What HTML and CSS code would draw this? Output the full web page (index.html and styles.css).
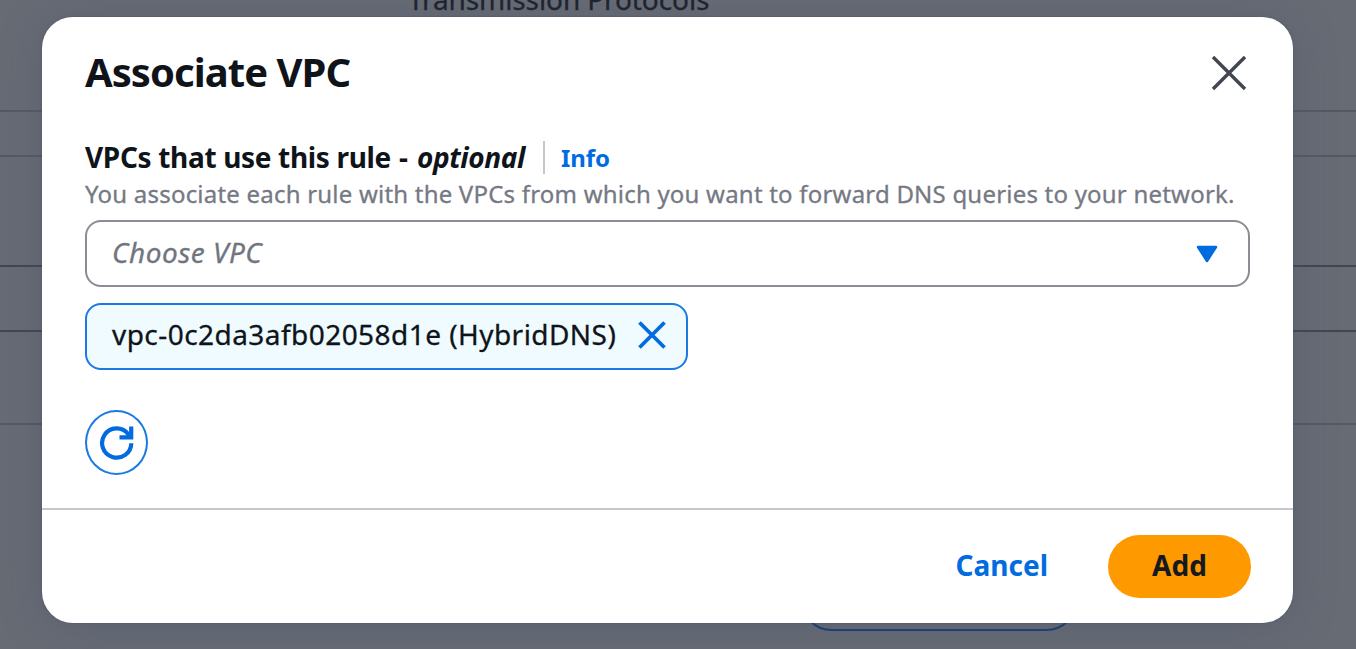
FILE: index.html
```
<!DOCTYPE html>
<html lang="en">
<head>
<meta charset="utf-8">
<title>Associate VPC</title>
<link rel="stylesheet" href="styles.css">
</head>
<body>
<div class="page">
  <div class="row row-heading"><span class="page-label">Transmission Protocols</span></div>
  <div class="row row-gap"></div>
  <div class="row row-tall"></div>
  <div class="row row-head"></div>
  <div class="row row-item"></div>
  <div class="row-last"><div class="page-button"></div></div>
</div>
<div class="modal" role="dialog" aria-labelledby="title">
  <header class="modal-header">
    <h1 class="title" id="title">Associate VPC</h1>
    <button class="close" aria-label="Close">
      <svg width="36" height="36" viewBox="0 0 36 36"><path d="M2 2 34 34M34 2 2 34"/></svg>
    </button>
  </header>
  <main class="modal-body">
    <div class="label-row">
      <span class="label">VPCs that use this rule</span>
      <span class="dash">-</span>
      <i class="optional">optional</i>
      <a class="info">Info</a>
    </div>
    <p class="description">You associate each rule with the VPCs from which you want to forward DNS queries to your network.</p>
    <div class="select">
      <span class="placeholder">Choose VPC</span>
      <svg class="caret" width="22" height="18" viewBox="0 0 22 18"><path d="M2 2H20L11 16Z"/></svg>
    </div>
    <div class="chip">
      <span class="chip-text">vpc-0c2da3afb02058d1e (HybridDNS)</span>
      <svg class="chip-close" width="28" height="28" viewBox="0 0 28 28"><path d="M1.5 1.5 26.5 26.5M26.5 1.5 1.5 26.5"/></svg>
    </div>
    <button class="refresh" aria-label="Refresh">
      <svg width="36" height="36" viewBox="0 0 36 36"><path d="M32.3 18.2A14.6 14.6 0 1 1 29 8.8L31 12M32.2 1.5V12.4H20.5"/></svg>
    </button>
  </main>
  <footer class="modal-footer">
    <button class="cancel">Cancel</button>
    <button class="add"><span class="add-text">Add</span></button>
  </footer>
</div>
</body>
</html>
```
FILE: styles.css
```
* { box-sizing: border-box; }
body { margin: 0; width: 1356px; height: 649px; overflow: hidden; background: #676b74; font-family: "Noto Sans", sans-serif; color: #0f141a; }
button { border: 0; padding: 0; background: none; font: inherit; color: inherit; }
svg { display: block; fill: none; flex: none; }
span, a, h1, p { white-space: nowrap; }
.page { height: 649px; display: flex; flex-direction: column; }
.row { border-bottom: 2px solid #555965; flex: none; }
.row-heading { height: 112px; padding-left: 408px; }
.page-label { display: block; margin-top: -18px; font-size: 28px; line-height: 34px; letter-spacing: -0.1px; color: #1c222d; -webkit-text-stroke: .3px #1c222d; }
.row-gap { height: 45px; }
.row-tall { height: 110px; border-color: #424652; }
.row-head { height: 65px; border-color: #424652; }
.row-item { height: 93px; }
.row-last { height: 224px; padding-left: 800px; }
.page-button { width: 278px; height: 206px; border: 2px solid #173e73; border-radius: 32px; }

.modal { position: absolute; left: 42px; top: 17px; width: 1251px; height: 606px; display: flex; flex-direction: column; background: #fff; border-radius: 31px; box-shadow: 0 4px 42px rgba(70, 80, 105, .35), 0 0 2px #4e535e; }
.modal-header { height: 112px; padding: 38px 46px 0 43px; display: flex; justify-content: space-between; align-items: flex-start; }
.title { margin: -11px 0 0; font-size: 40px; line-height: 56px; font-weight: 700; letter-spacing: -.95px; }
.close svg { stroke: #424650; stroke-width: 3.4; }
.modal-body { height: 379px; padding: 0 43px; display: flex; flex-direction: column; align-items: flex-start; }
.label-row { height: 46px; padding-top: 10px; display: flex; align-items: center; }
.label, .dash, .optional { font-size: 28px; line-height: 34px; font-weight: 700; }
.label { letter-spacing: -.33px; }
.dash { margin-left: 8px; }
.optional { margin-left: 9px; letter-spacing: -.4px; }
.info { margin-left: 18px; padding-left: 16px; border-left: 2px solid #c6c6cd; font-size: 24px; line-height: 33px; font-weight: 700; color: #006ce0; }
.description { margin: 2px 0 0; height: 43px; padding-top: 1px; font-size: 24px; line-height: 32px; letter-spacing: .21px; color: #757983; -webkit-text-stroke: .3px #757983; }
.select { width: 1165px; height: 67px; padding: 0 30px 3px 25px; border: 2px solid #8c8c94; border-radius: 16px; display: flex; justify-content: space-between; align-items: center; }
.placeholder { font-size: 28px; line-height: 36px; letter-spacing: .5px; font-style: italic; color: #70757f; -webkit-text-stroke: .3px #70757f; }
.caret { fill: #006ce0; stroke: #006ce0; stroke-width: 2.5; stroke-linejoin: round; margin-top: 3px; }
.chip { margin-top: 16px; width: 603px; height: 67px; padding: 0 20px 4px 25px; border: 2.5px solid #1a79e3; border-radius: 16px; background: #f0fbff; display: flex; justify-content: space-between; align-items: center; }
.chip-text { margin-top: -1px; font-size: 28px; line-height: 36px; letter-spacing: .45px; -webkit-text-stroke: .3px #0f141a; }
.chip-close { stroke: #006ce0; stroke-width: 3.8; }
.refresh { margin-top: 40px; width: 63px; height: 65px; border: 2.2px solid #1a79e3; border-radius: 50%; display: flex; align-items: center; justify-content: center; }
.refresh svg { stroke: #006ce0; stroke-width: 4.2; }
.modal-footer { height: 115px; border-top: 2.5px solid #c6c6cd; padding: 25px 42px 0 0; display: flex; justify-content: flex-end; gap: 60px; }
.cancel, .add { height: 63px; font-size: 28px; line-height: 36px; font-weight: 700; padding-bottom: 3px; }
.cancel { color: #006ce0; }
.add { width: 143px; border-radius: 32px; background: #f90; color: #16191f; }
```
